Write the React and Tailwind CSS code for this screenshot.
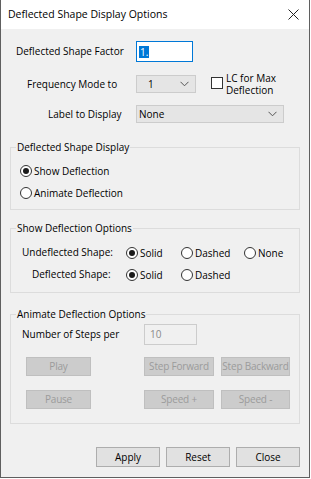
import React from "react";

const font = { fontFamily: '"Open Sans", "Noto Sans", sans-serif' };

function Chevron() {
  return (
    <svg width="9" height="6" viewBox="0 0 9 6" className="shrink-0">
      <path d="M0.5 0.8 L4.5 4.8 L8.5 0.8" fill="none" stroke="#555" strokeWidth="1" />
    </svg>
  );
}

function Radio({ checked, label, className = "" }) {
  return (
    <div className={"flex items-center " + className}>
      <div className="w-[12px] h-[12px] rounded-full border border-[#333] bg-white flex items-center justify-center shrink-0">
        {checked && <div className="w-[6px] h-[6px] rounded-full bg-[#1a1a1a]" />}
      </div>
      <span className="ml-[2px] text-[10px] text-black leading-none">{label}</span>
    </div>
  );
}

function DisabledBtn({ children, w }) {
  return (
    <div className={"h-[19px] bg-[#cccccc] border border-[#bfbfbf] flex items-center justify-center text-[10px] tracking-[-0.2px] whitespace-nowrap text-[#9b9b9b] " + w}>
      {children}
    </div>
  );
}

function Btn({ children }) {
  return (
    <div className="w-[64px] h-[20px] bg-[#e1e1e1] border border-[#adadad] flex items-center justify-center text-[10px] text-black">
      {children}
    </div>
  );
}

export default function App() {
  return (
    <div style={font} className="w-[311px] h-[479px] bg-white">
      <div className="w-[310px] h-[478px] bg-[#f0f0f0] border-l border-r border-b border-[#5f5f5f] flex flex-col">
        {/* Title bar */}
        <div className="h-[29px] bg-white flex items-center justify-between pl-[7px] pr-[10px] shrink-0">
          <span className="text-[10.5px] text-black">Deflected Shape Display Options</span>
          <svg width="11" height="11" viewBox="0 0 11 11">
            <path d="M0.5 0.5 L10.5 10.5 M10.5 0.5 L0.5 10.5" stroke="#222" strokeWidth="1" />
          </svg>
        </div>

        {/* Row 1 */}
        <div className="flex items-center mt-[12px] h-[21px]">
          <span className="ml-[15px] w-[120px] text-[10px] text-black">Deflected Shape Factor</span>
          <div className="w-[57px] h-[21px] border border-[#0078d7] bg-white flex items-center pl-[2px]">
            <span className="bg-[#0078d7] text-white text-[10px] leading-[12px] px-[1px]">1.</span>
          </div>
        </div>

        {/* Row 2 */}
        <div className="flex items-start mt-[13px]">
          <span className="ml-[26px] w-[109px] text-[10px] text-black mt-[2px]">Frequency Mode to</span>
          <div className="w-[60px] h-[18px] bg-[#e5e5e5] border border-[#cccccc] flex items-center justify-between pl-[11px] pr-[6px] text-[10px] text-black">
            <span>1</span>
            <Chevron />
          </div>
          <div className="ml-[15px] w-[12px] h-[12px] border border-[#333] bg-white mt-[2px]" />
          <div className="ml-[3px] text-[10px] text-black leading-[12px] -mt-[3px]">
            <div>LC for Max</div>
            <div>Deflection</div>
          </div>
        </div>

        {/* Row 3 */}
        <div className="flex items-center mt-[9px]">
          <span className="ml-[47px] w-[88px] text-[10px] text-black">Label to Display</span>
          <div className="w-[148px] h-[18px] bg-[#e5e5e5] border border-[#cccccc] flex items-center justify-between pl-[2px] pr-[6px] text-[10px] text-black">
            <span>None</span>
            <Chevron />
          </div>
        </div>

        {/* Group 1 */}
        <fieldset className="mx-[9px] mt-[19px] h-[68px] border border-[#dcdcdc] px-[9px]">
          <legend className="ml-[-4px] px-[1px] text-[10px] text-black leading-none">Deflected Shape Display</legend>
          <Radio checked label="Show Deflection" className="mt-[13px]" />
          <Radio label="Animate Deflection" className="mt-[10px]" />
        </fieldset>

        {/* Group 2 */}
        <fieldset className="mx-[9px] mt-[13px] h-[70px] border border-[#dcdcdc]">
          <legend className="ml-[5px] px-[1px] text-[10px] text-black leading-none">Show Deflection Options</legend>
          <div className="flex items-center mt-[12px]">
            <span className="w-[115px] pl-[11px] text-[10px] text-black">Undeflected Shape:</span>
            <Radio checked label="Solid" className="w-[55px]" />
            <Radio label="Dashed" className="w-[63px]" />
            <Radio label="None" />
          </div>
          <div className="flex items-center mt-[7px]">
            <span className="w-[115px] pl-[21px] text-[10px] text-black">Deflected Shape:</span>
            <Radio checked label="Solid" className="w-[55px]" />
            <Radio label="Dashed" />
          </div>
        </fieldset>

        {/* Group 3 */}
        <fieldset className="mx-[9px] mt-[16px] h-[115px] border border-[#dcdcdc]">
          <legend className="ml-[5px] px-[1px] text-[10px] text-black leading-none">Animate Deflection Options</legend>
          <div className="flex items-center mt-[5px]">
            <span className="w-[133px] pl-[11px] text-[10px] text-black">Number of Steps per</span>
            <div className="w-[53px] h-[21px] border border-[#cccccc] bg-[#f0f0f0] flex items-center pl-[5px] text-[10px] text-[#8a8a8a]">10</div>
          </div>
          <div className="flex mt-[12px] pl-[15px]">
            <DisabledBtn w="w-[65px]">Play</DisabledBtn>
            <div className="ml-[53px]"><DisabledBtn w="w-[70px]">Step Forward</DisabledBtn></div>
            <div className="ml-[7px]"><DisabledBtn w="w-[69px]">Step Backward</DisabledBtn></div>
          </div>
          <div className="flex mt-[14px] pl-[15px]">
            <DisabledBtn w="w-[65px]">Pause</DisabledBtn>
            <div className="ml-[53px]"><DisabledBtn w="w-[70px]">Speed +</DisabledBtn></div>
            <div className="ml-[7px]"><DisabledBtn w="w-[69px]">Speed -</DisabledBtn></div>
          </div>
        </fieldset>

        {/* Bottom buttons */}
        <div className="flex justify-end gap-[6px] pr-[9px] mt-[23px]">
          <Btn>Apply</Btn>
          <Btn>Reset</Btn>
          <Btn>Close</Btn>
        </div>
      </div>
    </div>
  );
}
